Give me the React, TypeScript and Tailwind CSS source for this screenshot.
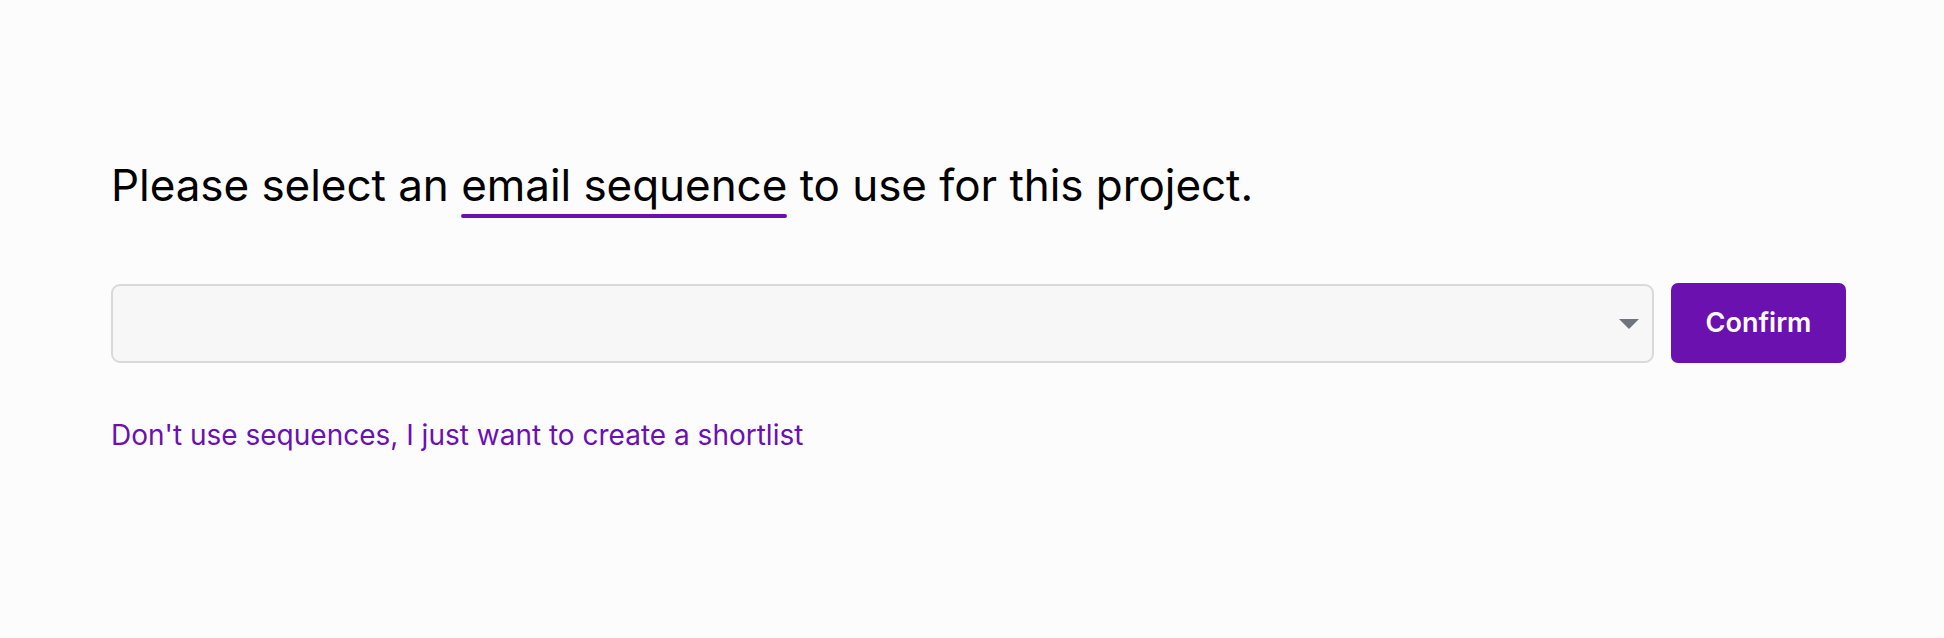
import React from "react";

const sequences: string[] = [];

const SequencePicker: React.FC = () => {
  const [value, setValue] = React.useState("");

  return (
    <div className="min-h-screen w-full bg-[#fcfcfc] text-black font-['Inter','Liberation_Sans',sans-serif]">
      <div className="pl-[111px] pr-[98px] pt-[157px]">
        {/* Heading */}
        <h1 className="text-[44px] leading-[56px] font-normal tracking-[-0.05px]">
          Please select an{" "}
          <span className="relative inline-block">
            email sequence
            <span className="absolute left-0 right-0 top-[57px] h-[4px] rounded-full bg-[#6b11b0]" />
          </span>{" "}
          to use for this project.
        </h1>

        {/* Picker row */}
        <div className="mt-[70px] flex items-end gap-[17px]">
          <div className="relative flex-1">
            <select
              value={value}
              onChange={(e) => setValue(e.target.value)}
              className="block h-[79px] w-full appearance-none rounded-[9px] border-2 border-[#d9d9d9] bg-[#f7f7f7] px-5 text-[24px] outline-none"
            >
              <option value="" />
              {sequences.map((s) => (
                <option key={s} value={s}>
                  {s}
                </option>
              ))}
            </select>
            <svg
              className="pointer-events-none absolute right-[15px] top-1/2 -translate-y-1/2"
              width="20"
              height="10"
              viewBox="0 0 20 10"
            >
              <path d="M0 0 H20 L10 10 Z" fill="#6f747d" />
            </svg>
          </div>
          <button className="h-[80px] w-[175px] rounded-[7px] bg-[#6b11b0] text-[27px] font-semibold text-white">
            Confirm
          </button>
        </div>

        {/* Skip link */}
        <a
          href="#"
          className="mt-[55px] inline-block text-[28px] leading-[34px] text-[#6b11b0]"
        >
          Don't use sequences, I just want to create a shortlist
        </a>
      </div>
    </div>
  );
};

export default function App() {
  return <SequencePicker />;
}
